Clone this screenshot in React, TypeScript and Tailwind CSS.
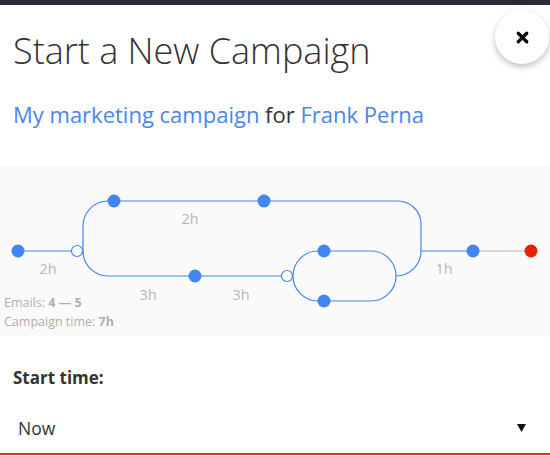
import { X } from "lucide-react";

const BLUE = "#4285f4";

function Dot({ x, y }: { x: number; y: number }) {
  return <circle cx={x} cy={y} r={6.5} fill={BLUE} />;
}

function Hollow({ x, y }: { x: number; y: number }) {
  return <circle cx={x} cy={y} r={5.5} fill="#fff" stroke={BLUE} strokeWidth={1.2} />;
}

function Label({ x, y, children }: { x: number; y: number; children: string }) {
  return (
    <text x={x} y={y} textAnchor="middle" fontSize={14.5} fill="#bdb6b6" fontFamily="'Open Sans', sans-serif">
      {children}
    </text>
  );
}

function Flow() {
  return (
    <svg width="550" height="170" viewBox="0 0 550 170" className="block">
      <g fill="none" stroke={BLUE} strokeWidth={1.2}>
        <path d="M18 85 H72" />
        <path d="M83 88 V60 A25 25 0 0 1 108 35 H398 A23 23 0 0 1 421 58 V85" />
        <path d="M83 85 A25 25 0 0 0 108 110 H282" />
        <path d="M318 85 A25 25 0 0 0 318 135 H371 A25 25 0 0 0 371 85 Z" />
        <path d="M396 110 A25 25 0 0 0 421 85 H473" />
      </g>
      <path d="M473 85 H531" stroke="#b5b5b5" strokeWidth={1.2} />
      <Dot x={18} y={85} />
      <Hollow x={77} y={85} />
      <Dot x={114} y={35} />
      <Dot x={264} y={35} />
      <Dot x={195} y={110} />
      <Hollow x={287} y={110} />
      <Dot x={324} y={85} />
      <Dot x={324} y={135} />
      <Dot x={473} y={85} />
      <circle cx={531} cy={85} r={6.5} fill="#e62200" />
      <Label x={48} y={108}>2h</Label>
      <Label x={190} y={58}>2h</Label>
      <Label x={148} y={134}>3h</Label>
      <Label x={241} y={134}>3h</Label>
      <Label x={444} y={108}>1h</Label>
    </svg>
  );
}

export default function App() {
  return (
    <div className="relative w-[550px] h-[456px] overflow-hidden bg-white font-['Open_Sans',sans-serif] text-[#333]">
      <div className="h-[5px] bg-[#2b2a33]" />
      <button className="absolute left-[495px] top-[10px] w-[54px] h-[54px] rounded-full bg-white shadow-[0_3px_6px_rgba(0,0,0,0.25)] flex items-center justify-center">
        <X size={17} strokeWidth={4.5} className="text-black" />
      </button>

      <h1 className="pl-[13px] pt-[26px] text-[36px] leading-[40px] font-light text-[#333]">
        Start a New Campaign
      </h1>
      <p className="pl-[13px] mt-[28px] text-[22px] leading-[30px]">
        <span className="text-[#4a86e8]">My marketing campaign</span>{" "}
        <span className="text-[#333]">for</span>{" "}
        <span className="text-[#4a86e8]">Frank Perna</span>
      </p>

      <div className="relative mt-[37px] h-[170px] bg-[#fafafa]">
        <Flow />
        <div className="absolute left-[4px] top-[127px] text-[12.5px] leading-[19px] text-[#b3acac]">
          <div>
            Emails: <b>4 — 5</b>
          </div>
          <div>
            Campaign time: <b>7h</b>
          </div>
        </div>
      </div>

      <div className="pl-[13px] mt-[30px] text-[17px] leading-[24px] font-bold text-[#333]">Start time:</div>
      <div className="mt-[21px] flex items-center justify-between pl-[18px] pr-[24px] pt-[5px] pb-[13px] border-b-2 border-[#e0301e]">
        <span className="text-[17.5px] leading-[24px] text-[#333]">Now</span>
        <svg width="9" height="8" viewBox="0 0 9 8" className="block">
          <polygon points="0,0 9,0 4.5,8" fill="#111" />
        </svg>
      </div>
    </div>
  );
}
